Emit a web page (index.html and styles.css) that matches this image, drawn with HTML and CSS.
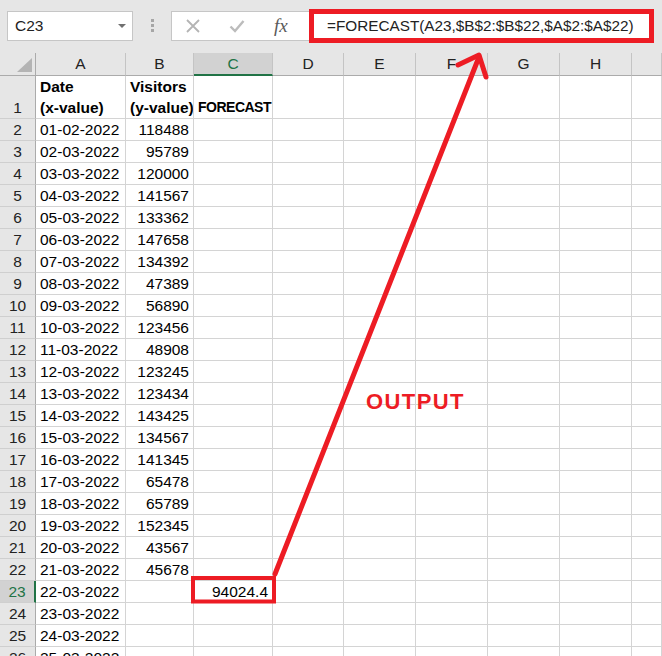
FILE: index.html
```html
<!DOCTYPE html>
<html>
<head>
<meta charset="utf-8">
<link rel="stylesheet" href="styles.css">
</head>
<body>
<div class="toolbar">
  <div class="namebox"><span>C23</span><i class="dd"></i></div>
  <div class="grip"><i></i><i></i><i></i></div>
  <div class="fbar">
    <svg class="ic ic-x" width="16" height="16" viewBox="0 0 16 16"><path d="M2 2 L14 14 M14 2 L2 14" stroke="#b4b4b4" stroke-width="1.8" fill="none"/></svg>
    <svg class="ic ic-ok" width="16" height="16" viewBox="0 0 16 16"><path d="M1.5 8.5 L6 13 L14.5 3" stroke="#bcbcbc" stroke-width="2.4" fill="none"/></svg>
    <span class="fx">fx</span>
    <div class="formula">=FORECAST(A23,$B$2:$B$22,$A$2:$A$22)</div>
  </div>
</div>
<div class="sheet">
  <span class="corner"><i class="tri"></i></span><span class="ch">A</span><span class="ch">B</span><span class="ch sel-col">C</span><span class="ch">D</span><span class="ch">E</span><span class="ch">F</span><span class="ch">G</span><span class="ch">H</span><span class="ch"></span>
  <span class="rh r1">1</span><span class="r1 b"><span>Date</span><span>(x-value)</span></span><span class="r1 b"><span>Visitors</span><span>(y-value)</span></span><span class="r1 b fc">FORECAST</span><span></span><span></span><span></span><span></span><span></span><span></span>
  <span class="rh">2</span><span>01-02-2022</span><span class="n">118488</span><span></span><span></span><span></span><span></span><span></span><span></span><span></span>
  <span class="rh">3</span><span>02-03-2022</span><span class="n">95789</span><span></span><span></span><span></span><span></span><span></span><span></span><span></span>
  <span class="rh">4</span><span>03-03-2022</span><span class="n">120000</span><span></span><span></span><span></span><span></span><span></span><span></span><span></span>
  <span class="rh">5</span><span>04-03-2022</span><span class="n">141567</span><span></span><span></span><span></span><span></span><span></span><span></span><span></span>
  <span class="rh">6</span><span>05-03-2022</span><span class="n">133362</span><span></span><span></span><span></span><span></span><span></span><span></span><span></span>
  <span class="rh">7</span><span>06-03-2022</span><span class="n">147658</span><span></span><span></span><span></span><span></span><span></span><span></span><span></span>
  <span class="rh">8</span><span>07-03-2022</span><span class="n">134392</span><span></span><span></span><span></span><span></span><span></span><span></span><span></span>
  <span class="rh">9</span><span>08-03-2022</span><span class="n">47389</span><span></span><span></span><span></span><span></span><span></span><span></span><span></span>
  <span class="rh">10</span><span>09-03-2022</span><span class="n">56890</span><span></span><span></span><span></span><span></span><span></span><span></span><span></span>
  <span class="rh">11</span><span>10-03-2022</span><span class="n">123456</span><span></span><span></span><span></span><span></span><span></span><span></span><span></span>
  <span class="rh">12</span><span>11-03-2022</span><span class="n">48908</span><span></span><span></span><span></span><span></span><span></span><span></span><span></span>
  <span class="rh">13</span><span>12-03-2022</span><span class="n">123245</span><span></span><span></span><span></span><span></span><span></span><span></span><span></span>
  <span class="rh">14</span><span>13-03-2022</span><span class="n">123434</span><span></span><span></span><span></span><span></span><span></span><span></span><span></span>
  <span class="rh">15</span><span>14-03-2022</span><span class="n">143425</span><span></span><span></span><span></span><span></span><span></span><span></span><span></span>
  <span class="rh">16</span><span>15-03-2022</span><span class="n">134567</span><span></span><span></span><span></span><span></span><span></span><span></span><span></span>
  <span class="rh">17</span><span>16-03-2022</span><span class="n">141345</span><span></span><span></span><span></span><span></span><span></span><span></span><span></span>
  <span class="rh">18</span><span>17-03-2022</span><span class="n">65478</span><span></span><span></span><span></span><span></span><span></span><span></span><span></span>
  <span class="rh">19</span><span>18-03-2022</span><span class="n">65789</span><span></span><span></span><span></span><span></span><span></span><span></span><span></span>
  <span class="rh">20</span><span>19-03-2022</span><span class="n">152345</span><span></span><span></span><span></span><span></span><span></span><span></span><span></span>
  <span class="rh">21</span><span>20-03-2022</span><span class="n">43567</span><span></span><span></span><span></span><span></span><span></span><span></span><span></span>
  <span class="rh">22</span><span>21-03-2022</span><span class="n">45678</span><span></span><span></span><span></span><span></span><span></span><span></span><span></span>
  <span class="rh sel-row">23</span><span>22-03-2022</span><span></span><span class="n">94024.4</span><span></span><span></span><span></span><span></span><span></span><span></span>
  <span class="rh">24</span><span>23-03-2022</span><span></span><span></span><span></span><span></span><span></span><span></span><span></span><span></span>
  <span class="rh">25</span><span>24-03-2022</span><span></span><span></span><span></span><span></span><span></span><span></span><span></span><span></span>
  <span class="rh">26</span><span>25-03-2022</span><span></span><span></span><span></span><span></span><span></span><span></span><span></span><span></span>
</div>
<div class="output">OUTPUT</div>
<svg class="overlay" width="662" height="656" viewBox="0 0 662 656">
  <rect x="193" y="578" width="81" height="23.5" fill="none" stroke="#ed1c24" stroke-width="4"/>
  <path d="M275 574 L479 57" stroke="#ed1c24" stroke-width="5" fill="none" stroke-linecap="round"/>
  <path d="M458 65 L479 55 L486 77" stroke="#ed1c24" stroke-width="5" fill="none" stroke-linecap="round" stroke-linejoin="round"/>
</svg>
</body>
</html>
```
FILE: styles.css
```css
body {
  margin: 0;
  width: 662px;
  height: 656px;
  overflow: hidden;
  position: relative;
  background: #fff;
  font-family: "Liberation Sans", Arial, sans-serif;
  color: #000;
}

.toolbar {
  height: 53px;
  box-sizing: border-box;
  background: #e6e6e6;
  display: flex;
  align-items: flex-start;
  padding: 11px 0 0 7px;
}

.namebox {
  width: 126px;
  height: 30px;
  box-sizing: border-box;
  border: 1px solid #c6c6c6;
  background: #fff;
  display: flex;
  align-items: center;
  justify-content: space-between;
  padding: 0 6px 0 7px;
  font-size: 15.5px;
  color: #222;
}

.dd {
  width: 0;
  height: 0;
  border-left: 4px solid transparent;
  border-right: 4px solid transparent;
  border-top: 4px solid #707070;
}

.grip {
  width: 38px;
  display: flex;
  flex-direction: column;
  align-items: center;
  gap: 2px;
  padding-top: 8px;
}

.grip i {
  width: 3px;
  height: 3px;
  background: #a6a6a6;
}

.fbar {
  width: 481px;
  height: 30px;
  box-sizing: border-box;
  border: 1px solid #c6c6c6;
  background: #fff;
  display: flex;
  align-items: flex-start;
}

.ic {
  margin-top: 6px;
  flex: none;
}

.ic-x { margin-left: 13px; }
.ic-ok { margin-left: 28px; }

.fx {
  margin-left: 29px;
  width: 20px;
  font-family: "Liberation Serif", serif;
  font-style: italic;
  font-size: 19px;
  line-height: 28px;
  color: #5a5a5a;
  flex: none;
}

.formula {
  margin-left: 15px;
  margin-top: -3px;
  width: 345px;
  height: 34px;
  box-sizing: border-box;
  border: 5px solid #ed1c24;
  padding-left: 13px;
  font-size: 15.3px;
  line-height: 24px;
  color: #222;
  white-space: nowrap;
  flex: none;
  background: #fff;
}

.sheet {
  display: grid;
  grid-template-columns: 36px 90px 68px 79px 71px 72px 72px 72px 72px 30px;
  grid-template-rows: 23px 43px;
  grid-auto-rows: 22px;
}

.sheet > span {
  box-sizing: border-box;
  border-right: 1px solid #d4d4d4;
  border-bottom: 1px solid #d4d4d4;
  font-size: 15.5px;
  padding: 0 4px;
  white-space: nowrap;
  overflow: hidden;
  display: flex;
  align-items: center;
}

.sheet > .ch {
  background: #e6e6e6;
  border-right-color: #c4c4c4;
  border-bottom-color: #ababab;
  justify-content: center;
  color: #222;
}

.sheet > .corner {
  background: #e6e6e6;
  border-right-color: #ababab;
  border-bottom-color: #ababab;
  justify-content: flex-end;
  align-items: flex-end;
  padding: 0 3px 3px 0;
}

.tri {
  width: 15px;
  height: 14px;
  background: #b4b4b4;
  clip-path: polygon(100% 0, 100% 100%, 0 100%);
}

.sheet > .rh {
  background: #e6e6e6;
  border-right-color: #ababab;
  border-bottom-color: #cfcfcf;
  justify-content: center;
  color: #222;
}

.sheet > .sel-col {
  background: #d2d2d2;
  color: #217346;
  border-bottom: 2px solid #217346;
}

.sheet > .sel-row {
  background: #d2d2d2;
  color: #217346;
  border-right: 2px solid #217346;
}

.sheet > .r1 {
  flex-direction: column;
  justify-content: flex-end;
  align-items: flex-start;
  line-height: 21px;
}

.sheet > .rh.r1 {
  align-items: center;
}

.b {
  font-weight: bold;
}

.sheet > .fc {
  font-size: 14px;
  letter-spacing: -0.5px;
  padding-left: 4px;
}

.sheet > .n {
  justify-content: flex-end;
}

.output {
  position: absolute;
  left: 366px;
  top: 391px;
  font-size: 22px;
  line-height: 1;
  font-weight: bold;
  letter-spacing: 1.4px;
  color: #ed1c24;
}

.overlay {
  position: absolute;
  left: 0;
  top: 0;
  pointer-events: none;
}
```
